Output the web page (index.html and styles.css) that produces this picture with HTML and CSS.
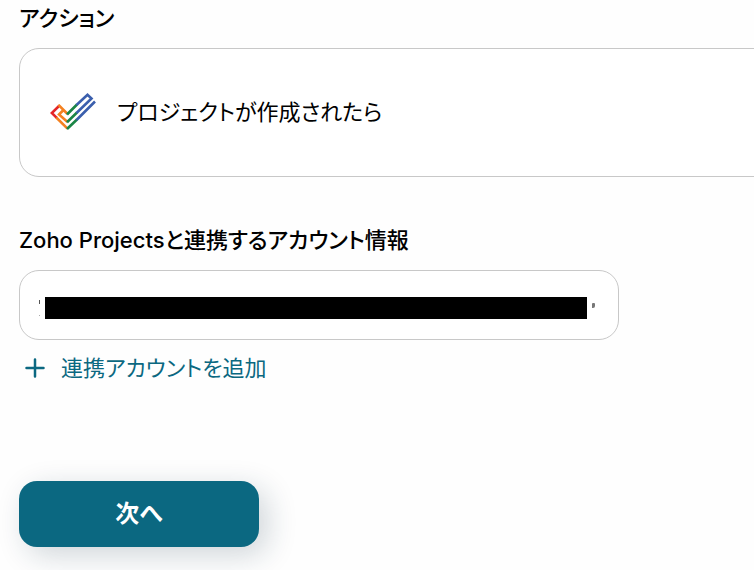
FILE: index.html
```html
<!DOCTYPE html>
<html lang="ja">
<head>
  <meta charset="utf-8">
  <title>Zoho Projects</title>
  <link rel="stylesheet" href="styles.css">
</head>
<body>
  <main class="page">
    <h2 class="heading">アクション</h2>
    <div class="action-card">
      <svg class="logo" viewBox="0 0 46 38" fill="none" stroke-width="2.6" aria-hidden="true">
        <path stroke="#e42527" d="M9.500 12.500L1.800 20L7 25.200"/>
        <path stroke="#f48120" d="M8.500 11.800L17.500 21M6.300 24.500L17.500 35.700M13.500 17L9 21.500L17.500 29"/>
        <path stroke="#1a8545" d="M17 21.500L27 11.500M17 29.300L27 19.500M17 36L27 26.500"/>
        <path stroke="#3b5fad" d="M26.500 12L37.500 1.800L41.500 5.500L26.500 20M26.500 27L45 8.500"/>
      </svg>
      <span class="action-name">プロジェクトが作成されたら</span>
    </div>

    <label class="heading" for="account">Zoho Projectsと連携するアカウント情報</label>
    <div class="account-field">
      <input type="text" id="account" class="account-input" readonly>
      <div class="mask">
        <span class="mask-start"></span>
        <span class="mask-bar"></span>
        <span class="mask-end"></span>
      </div>
    </div>
    <a href="#" class="add-account">
      <svg class="plus" viewBox="0 0 20 20" aria-hidden="true">
        <path d="M10 1.500V18.500M1.500 10H18.500" stroke="currentColor" stroke-width="2.500" stroke-linecap="round"/>
      </svg>
      連携アカウントを追加
    </a>

    <button type="button" class="next-button">次へ</button>
  </main>
</body>
</html>
```
FILE: styles.css
```css
* {
  box-sizing: border-box;
}
body {
  margin: 0;
  background-color: #fefefe;
  color: #000;
  font-family: Inter, "Noto Sans CJK JP", sans-serif;
  font-size: 22px;
  line-height: 32px;
  font-feature-settings: "palt";
  overflow: hidden;
}
.page {
  padding: 2px 0 24px 19px;
}
.heading {
  display: block;
  margin: 0 0 14px;
  font-size: 22px;
  font-weight: 500;
}
.action-card {
  display: flex;
  align-items: center;
  gap: 21px;
  height: 129px;
  margin: 0 -30px 47px 0;
  padding: 0 30px 2px;
  border: 1px solid #c8c8c8;
  border-radius: 20px;
  background-color: #fff;
}
.logo {
  width: 46px;
  height: 38px;
}
.account-field {
  position: relative;
  max-width: 600px;
  height: 70px;
}
.account-input {
  width: 100%;
  height: 100%;
  padding: 0 20px;
  border: 1px solid #c8c8c8;
  border-radius: 20px;
  background-color: #fff;
  font: inherit;
}
.mask {
  position: absolute;
  inset: 27px 24px 21px 20px;
  display: flex;
  gap: 5px;
}
.mask-start {
  width: 1px;
  height: 16px;
  margin-top: 3px;
  border-top: 4px solid #555;
  border-bottom: 1px solid #aaa;
}
.mask-bar {
  flex: 1;
  background-color: #000;
}
.mask-end {
  width: 3px;
  height: 5px;
  margin-top: 6px;
  border-radius: 1px 1px 2px 0;
  background-color: #777;
}
.add-account {
  display: flex;
  align-items: center;
  gap: 16px;
  margin-top: 12px;
  padding-left: 6px;
  color: #0b6881;
  text-decoration: none;
}
.plus {
  width: 20px;
  height: 20px;
}
.next-button {
  width: 240px;
  height: 66px;
  margin-top: 97px;
  border: none;
  border-radius: 18px;
  background-color: #0b6881;
  box-shadow: 8px 8px 30px rgba(20, 50, 70, 0.2);
  color: #fff;
  font: inherit;
  font-size: 24px;
  font-weight: 700;
  cursor: pointer;
}
```
